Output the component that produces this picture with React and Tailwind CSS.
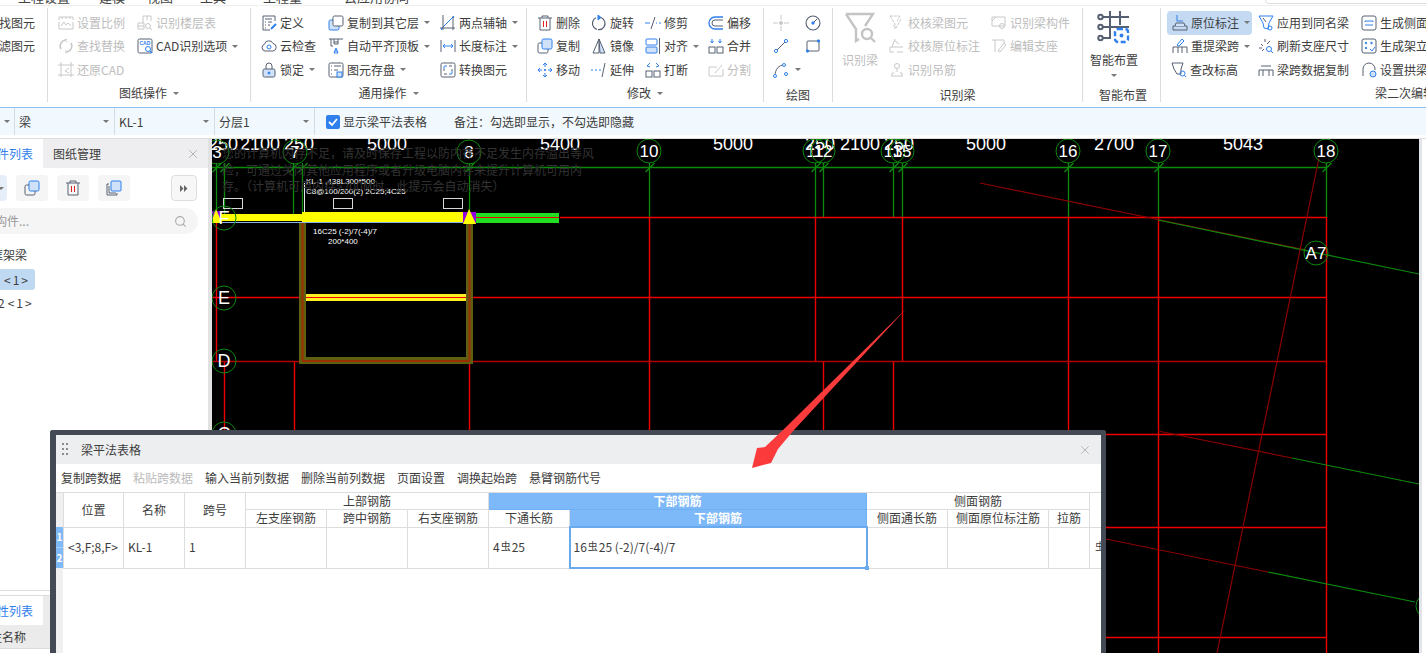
import React from "react";
import { Search, X } from "lucide-react";

const B = "#2f80ed", D = "#566072", G = "#c8c8c8", L = "#cfe2fa";
const Svg = ({ c = D, s = 16, children }) => (
  <svg width={s} height={s} viewBox="0 0 16 16" fill="none" stroke={c} strokeWidth="1" className="shrink-0">{children}</svg>
);
const ic = {
  scale: <Svg c={G}><path d="M1 5V2h14v3M1 7v7h14V7M3 11l3-4 2 3 2-2 3 3" /><path d="M4 2v2M8 2v2M12 2v2" /></Svg>,
  floor: <Svg c={G}><path d="M6 1h8v5M1 8h6v6H1zM6 1v7M10 1v4M1 11h6" /><circle cx="11" cy="11" r="2.5" /><path d="M13 13l2 2" /></Svg>,
  replace: <Svg c={G}><path d="M3 11A6 6 0 0 1 8 2M13 5a6 6 0 0 1-5 9" strokeWidth="1.5" /><path d="M9 1l-2 1 2 2M7 12l2 2-2 1" /></Svg>,
  cad: <Svg><rect x="1" y="1" width="14" height="14" rx="1.5" stroke={D} /><text x="2.5" y="6.5" fontSize="5" fill={B} stroke="none" fontFamily="Liberation Sans" fontWeight="700">CAD</text><circle cx="11" cy="11" r="2.5" stroke={B} /><path d="M13 13l2 2" stroke={B} strokeWidth="1.5" /></Svg>,
  restore: <Svg c={G}><path d="M3 0v15M13 0v15M0 3h16M0 13h16" /><path d="M11 6L7 9l4 2" /></Svg>,
  define: <Svg><path d="M14 6V1H2v14h7" /><path d="M4 4h7M4 7h1M7 7h4M4 10h1M7 10h2M4 13h1" /><path d="M10 14l5-5" stroke={B} strokeWidth="2" /></Svg>,
  cloud: <Svg><path d="M4 13a3.5 3.5 0 0 1-.5-6.8A4.5 4.5 0 0 1 12 5.5 3.8 3.8 0 0 1 12 13z" /><circle cx="8" cy="9" r="2" stroke={B} /></Svg>,
  lock: <Svg><path d="M5 7V4a3 3 0 0 1 6 0v3" /><rect x="2" y="7" width="12" height="8" rx="1.5" fill={L} /><circle cx="8" cy="11" r="1" fill={B} stroke={B} /></Svg>,
  copyF: <Svg><rect x="1" y="5" width="10" height="10" rx="1.5" fill={L} stroke={B} /><rect x="5" y="1" width="10" height="10" rx="1.5" fill="#fff" /></Svg>,
  align: <Svg><path d="M1 1h14M3 1v7M3 8h2" /><path d="M6 1v5h4V1M6 4h4" /><path d="M10 15H6l2-5zM6.500 13h3" stroke={B} /></Svg>,
  store: <Svg><rect x="1" y="1" width="14" height="14" rx="1.5" /><path d="M3 4h1M6 4h7M3 8h1M6 8h4M3 12h1" /><rect x="9" y="10" width="5" height="5" fill={L} stroke={B} /></Svg>,
  axis: <Svg><path d="M1 14L14 1" stroke={B} /><path d="M3 0v15M0 13h15M13 1v14" /><path d="M1 14h1" stroke={B} strokeWidth="2" /><path d="M13 2h1" stroke={B} strokeWidth="2" /></Svg>,
  dim: <Svg><path d="M1 2v12M15 2v12" /><path d="M3 8h10M5 6L3 8l2 2M11 6l2 2-2 2" stroke={B} /></Svg>,
  conv: <Svg><rect x="1" y="1" width="14" height="14" rx="1.5" /><path d="M4 7V5a1 1 0 0 1 1-1h2M12 9v2a1 1 0 0 1-1 1H9" stroke={B} /><path d="M3 8h2M11 8h2M9 4h3M4 12h3" /></Svg>,
  del: <Svg><path d="M1 3h14M5 3V1h6v2M3 3v12h10V3" /><path d="M6.5 6v6M9.5 6v6" stroke="#e02020" /></Svg>,
  rotate: <Svg><path d="M10 2.5a6.3 6.3 0 1 1-5 .2" strokeDasharray="18 1" strokeWidth="1.2" /><path d="M7 0v5l3-2.5z" fill={B} stroke={B} /></Svg>,
  trim: <Svg><path d="M0 8h5" stroke={B} /><path d="M11 8h1M14 8h2" stroke={B} /><path d="M10 2L6 14" /></Svg>,
  offset: <Svg><path d="M15 2H7a6 6 0 0 0 0 12h8" stroke={B} strokeWidth="1.3" /><path d="M15 5H7a3 3 0 0 0 0 6h8" /></Svg>,
  copy: <Svg><rect x="5" y="1" width="10" height="10" rx="1.5" fill={L} stroke={B} /><path d="M5 5H2.5A1.5 1.5 0 0 0 1 6.5v7A1.5 1.5 0 0 0 2.5 15h7a1.5 1.5 0 0 0 1.5-1.5V11" /></Svg>,
  mirror: <Svg><path d="M8 1l-6 14h6z" /><path d="M8 1l6 14H9z" fill={L} stroke={D} /></Svg>,
  alignC: <Svg><rect x="1" y="1" width="11" height="6" rx="1" stroke={B} /><rect x="1" y="9" width="11" height="6" rx="1" fill={L} stroke={B} /><path d="M14.5 0v16" /></Svg>,
  merge: <Svg><path d="M4 1v3M12 1v3" stroke={B} /><path d="M2.5 3L4 5l1.5-2M10.5 3L12 5l1.500-2" stroke={B} /><rect x="1" y="9" width="6" height="6" /><rect x="9" y="9" width="6" height="6" /></Svg>,
  move: <Svg c={B}><path d="M8 1v4M8 11v4M1 8h4M11 8h4M6 3l2-2 2 2M6 13l2 2 2-2M3 6L1 8l2 2M13 6l2 2-2 2" /><circle cx="8" cy="8" r=".7" fill={B} /></Svg>,
  extend: <Svg><path d="M0 8h2M4 8h2M8 8h2" stroke={B} /><path d="M14 1l-3 14" /></Svg>,
  breakI: <Svg><path d="M5 1L2 4l3 1M11 1l3 3-3 1" stroke={B} /><rect x="1" y="9" width="6" height="6" /><rect x="9" y="9" width="6" height="6" /></Svg>,
  split: <Svg c={G}><path d="M15 7v7H1V5h8" /><path d="M7 11l7-8" /></Svg>,
  point: <Svg c={G}><path d="M0 8h5M11 8h5M8 0v5M8 11v5" /><circle cx="8" cy="8" r="1.500" fill={G} /></Svg>,
  circ: <Svg><circle cx="8" cy="8" r="7" strokeWidth="1.1" /><path d="M8 8l4-4" /><circle cx="8" cy="8" r="1.200" fill={B} stroke={B} /></Svg>,
  line: <Svg><path d="M3 13L13 3" /><circle cx="3" cy="13" r="1.600" fill="#fff" stroke={B} /><circle cx="13" cy="3" r="1.600" fill="#fff" stroke={B} /></Svg>,
  rect: <Svg><rect x="2" y="3" width="12" height="10" rx="1" /><circle cx="13.500" cy="3" r="1.200" fill={B} stroke={B} /><circle cx="2.500" cy="13" r="1.200" fill={B} stroke={B} /></Svg>,
  arc: <Svg><path d="M2 14C2 7 6 3 11 3" /><circle cx="2" cy="14" r="1.500" fill="#fff" stroke={B} /><circle cx="11" cy="3" r="1.500" fill="#fff" stroke={B} /><circle cx="13" cy="12" r="1.500" fill="#fff" stroke={B} /></Svg>,
  checkB: <Svg c={G}><path d="M1 1h10M1 1l5 8v5M11 1L8 6M12 4l-5 9 -3-3" strokeDasharray="3 1" /></Svg>,
  checkP: <Svg c={G}><path d="M1 14h4M1 14V9h13M6 1L3 9M5 2l5 4" /><path d="M8 14h6" /></Svg>,
  hang: <Svg c={G}><circle cx="8" cy="4" r="2.500" /><path d="M8 7v3M2 14h12M3 14v-3h2M13 14v-3h-2" /></Svg>,
  bComp: <Svg c={G}><path d="M1 2h13v9H1zM1 6l4-4" /><circle cx="11" cy="11" r="2.500" /></Svg>,
  seat: <Svg c={G}><path d="M1 2h12M4 2v12M13 2v3M7 13l6-8 2 2-6 7z" /></Svg>,
  origin: <Svg><path d="M1 15v-4h14v4M1 15h14" /><path d="M3 11l1-3h8l1 3" fill={L} /><path d="M5 0v6h6" stroke={B} /></Svg>,
  same: <Svg><path d="M1 1h14l-4 7-1 6-4-1-1-5z" stroke={B} /><path d="M5 3l3 4" /><circle cx="12" cy="13" r="2" stroke={B} /></Svg>,
  refresh: <Svg><path d="M3 6l2 2M7 1v3M1 10h3M12 3L9 6M4 13l2-2" /><circle cx="11" cy="11" r="2.500" stroke={B} /><path d="M13 13l2 2" stroke={B} /></Svg>,
  side: <Svg><rect x="1" y="1" width="14" height="14" rx="2" /><path d="M4 6h8M4 6v1M12 6v1M4 10h8" stroke={B} /></Svg>,
  reext: <Svg><path d="M1 15V9h14v6M6 9v6M10 9v6" /><path d="M5 7l5-6 2 2-5 5z" stroke={B} /></Svg>,
  stand: <Svg><rect x="1" y="1" width="14" height="14" rx="2" /><circle cx="5" cy="5" r=".8" fill={B} stroke={B} /><circle cx="10.500" cy="5" r=".8" fill={B} stroke={B} /><circle cx="5" cy="10" r=".8" fill={B} stroke={B} /><path d="M9 11l2 2 3-4" stroke={B} /></Svg>,
  elev: <Svg><path d="M1 1h11l-2 6v5H6l-3-5z" /><circle cx="11.500" cy="11.500" r="2.500" stroke={B} /><path d="M13.500 13.500l1.500 1.500" stroke={B} /></Svg>,
  spanC: <Svg><path d="M1 14V8h14v6M5 8v6M11 8v6M3 4h10" /></Svg>,
  arch: <Svg><path d="M2 14V7a6 6 0 0 1 12 0v1" /><circle cx="12" cy="12" r="3" stroke={B} fill={L} /></Svg>,
};

const Caret = ({ cls = "ml-[5px]" }) => (
  <span className={`inline-block w-0 h-0 border-x-[3px] border-t-[3px] border-x-transparent border-t-[#777] ${cls}`} />
);

const Item = ({ i, t, caret, off }) => (
  <div className={`flex items-center h-[23.6px] gap-[3px] whitespace-nowrap ${off ? "text-[#bdbdbd]" : "text-[#3d3d3d]"}`}>
    {i ? ic[i] : null}
    {t ? <span>{t}</span> : null}
    {caret ? <Caret cls="ml-[2px]" /> : null}
  </div>
);

const Col = ({ w, children }) => <div className={`flex flex-col shrink-0 ${w}`}>{children}</div>;

const Group = ({ w, pl = "pl-[10px]", label, caret, low, children, border = true }) => (
  <div className={`shrink-0 ${w} h-[94px] flex flex-col ${border ? "border-r border-[#dcdcdc]" : ""}`}>
    <div className={`flex h-[74px] pt-[3px] ${pl}`}>{children}</div>
    <div className={`h-[20px] flex items-center justify-center text-[#3d3d3d] whitespace-nowrap ${low ? "pt-[6px]" : "pt-[2px]"}`}>
      {label}{caret ? <Caret cls="ml-[6px]" /> : null}
    </div>
  </div>
);

const Ribbon = () => (
  <div className="flex h-[101px] pt-[2px] bg-white overflow-hidden shrink-0">
    <Group w="w-[48px]" pl="pl-0">
      <Col w="w-[47px] -ml-[1px]"><Item t="找图元" /><Item t="滤图元" /></Col>
    </Group>
    <Group w="w-[203px]" label="图纸操作" caret>
      <Col w="w-[79px]"><Item i="scale" t="设置比例" off /><Item i="replace" t="查找替换" off /><Item i="restore" t="还原CAD" off /></Col>
      <Col w="w-[100px]"><Item i="floor" t="识别楼层表" off /><Item i="cad" t="CAD识别选项" caret /></Col>
    </Group>
    <Group w="w-[276px]" label="通用操作" caret>
      <Col w="w-[67px]"><Item i="define" t="定义" /><Item i="cloud" t="云检查" /><Item i="lock" t="锁定" caret /></Col>
      <Col w="w-[112px]"><Item i="copyF" t="复制到其它层" caret /><Item i="align" t="自动平齐顶板" caret /><Item i="store" t="图元存盘" caret /></Col>
      <Col w="w-[85px]"><Item i="axis" t="两点辅轴" caret /><Item i="dim" t="长度标注" caret /><Item i="conv" t="转换图元" /></Col>
    </Group>
    <Group w="w-[237px]" label="修改" caret>
      <Col w="w-[54px]"><Item i="del" t="删除" /><Item i="copy" t="复制" /><Item i="move" t="移动" /></Col>
      <Col w="w-[54px]"><Item i="rotate" t="旋转" /><Item i="mirror" t="镜像" /><Item i="extend" t="延伸" /></Col>
      <Col w="w-[63px]"><Item i="trim" t="修剪" /><Item i="alignC" t="对齐" caret /><Item i="breakI" t="打断" /></Col>
      <Col w="w-[50px]"><Item i="offset" t="偏移" /><Item i="merge" t="合并" /><Item i="split" t="分割" off /></Col>
    </Group>
    <Group w="w-[69px]" pl="pl-[9px]" label="绘图" low>
      <Col w="w-[32px]"><Item i="point" /><Item i="line" /><div className="flex items-center h-[23.6px] w-[40px]">{ic.arc}<Caret cls="ml-[6px]" /></div></Col>
      <Col w="w-[20px]"><Item i="circ" /><Item i="rect" /></Col>
    </Group>
    <Group w="w-[250px]" pl="pl-0" label="识别梁" low>
      <Col w="w-[56px]">
        <div className="flex flex-col items-center text-[#bdbdbd] w-[54px]">
          <svg width="32" height="32" viewBox="0 0 32 32" fill="none" stroke="#c4c4c4" strokeWidth="2.400" className="mt-[1px]"><path d="M2 2h27l-8 12M2 2l10 15v12l3-2" /><circle cx="23" cy="22" r="5" /><path d="M27 26l4 4" /></svg>
          <span className="mt-[7px]">识别梁</span>
        </div>
      </Col>
      <Col w="w-[102px]"><Item i="checkB" t="校核梁图元" off /><Item i="checkP" t="校核原位标注" off /><Item i="hang" t="识别吊筋" off /></Col>
      <Col w="w-[85px]"><Item i="bComp" t="识别梁构件" off /><Item i="seat" t="编辑支座" off /></Col>
    </Group>
    <Group w="w-[78px]" pl="pl-0" label={<span className="ml-[3px]">智能布置</span>} low>
      <div className="flex flex-col items-center w-[62px] text-[#3d3d3d]">
        <svg width="34" height="34" viewBox="0 0 34 34" fill="none" stroke="#566072" strokeWidth="2">
          <path d="M6 6h26M6 16h26M6 27h8M13 0v27M23 0v14" /><circle cx="3.500" cy="6" r="2.200" /><circle cx="3.500" cy="16" r="2.200" /><circle cx="3.500" cy="27" r="2.200" />
          <rect x="18" y="18" width="13" height="13" rx="3" stroke="#2f80ed" strokeWidth="2.400" strokeDasharray="5 2.500" /><circle cx="24.500" cy="24.500" r="1" fill="#2f80ed" stroke="#2f80ed" />
        </svg>
        <span className="mt-[6px] whitespace-nowrap">智能布置</span>
        <Caret cls="mt-[5px]" />
      </div>
    </Group>
    <Group w="w-[490px]" pl="pl-[6px]" label={<span className="ml-[-2px]">梁二次编辑</span>} border={false}>
      <Col w="w-[91px]">
        <div className="w-[85px] pl-[5px] rounded-[4px] bg-[#c3daf2]"><Item i="origin" t="原位标注" caret /></div>
        <div className="pl-[5px]"><Item i="reext" t="重提梁跨" caret /></div>
        <div className="pl-[4px]"><Item i="elev" t="查改标高" /></div>
      </Col>
      <Col w="w-[103px]"><Item i="same" t="应用到同名梁" /><Item i="refresh" t="刷新支座尺寸" /><Item i="spanC" t="梁跨数据复制" /></Col>
      <Col w="w-[90px]"><Item i="side" t="生成侧面筋" /><Item i="stand" t="生成架立筋" /><Item i="arch" t="设置拱梁" /></Col>
    </Group>
  </div>
);

const Sel = ({ t, w = "w-[100px]" }) => (
  <div className={`${w} shrink-0 h-full border-r border-[#d5dce4] flex items-center justify-between pl-[4px] pr-[5px]`}>
    <span>{t}</span><Caret cls="" />
  </div>
);

const Toolbar = () => (
  <div className="flex items-center h-[28px] border-t border-[#8fc0f2] bg-[#f2f9fe] shrink-0 text-[#3d3d3d]">
    <Sel t="" w="w-[15px]" />
    <Sel t="梁" />
    <Sel t="KL-1" />
    <Sel t="分层1" />
    <span className="w-[14px] h-[14px] bg-[#2f80ed] rounded-[2px] ml-[11px] flex items-center justify-center">
      <svg width="12" height="12" viewBox="0 0 12 12" fill="none" stroke="#fff" strokeWidth="1.800"><path d="M2 6l3 3 5-6" /></svg>
    </span>
    <span className="ml-[3px]">显示梁平法表格</span>
    <span className="ml-[27px]">备注：勾选即显示，不勾选即隐藏</span>
  </div>
);

const PanelBtn = ({ children, cls = "w-[32px] bg-[#f5f5f5]" }) => (
  <div className={`h-[26px] rounded-[4px] flex items-center justify-center shrink-0 ${cls}`}>{children}</div>
);

const LeftPanel = () => (
  <div className="w-[208px] shrink-0 h-full flex flex-col bg-white overflow-hidden text-[#3d3d3d]">
    <div className="h-[29px] flex bg-[#eeeef0] shrink-0">
      <div className="w-[43px] bg-white flex items-center justify-end pr-[10px] text-[#2f80ed] whitespace-nowrap">构件列表</div>
      <div className="ml-[10px] flex items-center">图纸管理</div>
      <X size={14} strokeWidth={1.200} color="#999" className="ml-auto mr-[8px] self-center" />
    </div>
    <div className="flex gap-[9px] mt-[7px] -ml-[25px] shrink-0">
      <PanelBtn cls="w-[32px] bg-[#e6eefa]"><Caret cls="ml-[20px]" /></PanelBtn>
      <PanelBtn>{ic.copy}</PanelBtn>
      <PanelBtn>{ic.del}</PanelBtn>
      <PanelBtn>
        <Svg><rect x="5" y="1" width="10" height="10" rx="1" fill={L} stroke={B} /><path d="M3 4H1v11h10v-2M3 6v7h7" /></Svg>
      </PanelBtn>
      <PanelBtn cls="w-[26px] ml-[32px] bg-[#f7f7f7] border border-[#dedede]">
        <svg width="8" height="7" viewBox="0 0 8 7" fill="#666"><path d="M0 0l3.500 3.500L0 7zM4 0l3.500 3.500L4 7z" /></svg>
      </PanelBtn>
    </div>
    <div className="h-[26px] mt-[7px] -ml-[40px] w-[238px] rounded-full bg-[#f5f5f5] flex items-center pl-[11px] pr-[11px] text-[#999] shrink-0">
      <span>搜索构件...</span>
      <Search size={13} color="#aaa" className="ml-auto" />
    </div>
    <div className="mt-[12px] -ml-[9px] leading-[17px] shrink-0">框架梁</div>
    <div className="mt-[6px] w-[35px] h-[21px] bg-[#c0d9f2] rounded-r-[3px] flex items-center justify-end pr-[5px] tracking-[2px] shrink-0">&lt;1&gt;</div>
    <div className="mt-[2px] h-[21px] flex items-center -ml-[2px] shrink-0">2<span className="ml-[3px] tracking-[2px]">&lt;1&gt;</span></div>
    <div className="mt-auto border-t border-[#dcdcdc] shrink-0">
      <div className="h-[5px] border-b border-[#dcdcdc]" />
      <div className="h-[29px] bg-[#ebebeb] flex">
        <div className="w-[43px] bg-white flex items-center justify-end pr-[10px] text-[#2f80ed] whitespace-nowrap">属性列表</div>
      </div>
      <div className="h-[24px] bg-[#ebebeb] border-b border-[#dcdcdc] flex items-center justify-start -ml-[22px] pl-0 w-[230px] whitespace-nowrap">属性名称</div>
      <div className="h-[4px]" />
    </div>
  </div>
);

const RED = "#ee0000", DK = "#8a0000", GR = "#0c8a0c", WH = "#ffffff";
const Bubble = ({ x, y, t, fs = 17 }) => (
  <g>
    <circle cx={x} cy={y} r="12" fill="none" stroke={GR} />
    <text x={x} y={y + 6} fill={WH} fontSize={fs} textAnchor="middle" fontFamily="Liberation Sans">{t}</text>
  </g>
);
const Dim = ({ x, t }) => (
  <text x={x} y="150" fill={WH} fontSize="18" fontFamily="Liberation Sans">{t}</text>
);

const hLines = [
  [212, 470, 217.5], [560, 1326, 217.5], [212, 1326, 297.5], [1106, 1326, 434.5], [1106, 1326, 527.5], [1106, 1326, 637.5],
];
const vLines = [
  [216.5, 217, 361], [649.5, 217, 653], [815.5, 217, 361], [902.5, 217, 361], [1068.5, 217, 653], [1158.5, 217, 653], [1326.5, 217, 653],
  [224.5, 361, 434], [294.5, 361, 434], [469.5, 361, 434], [823.5, 361, 434], [893.5, 361, 434],
];

const Cad = () => (
  <svg width="1207" height="514" viewBox="212 139 1207 514" className="block">
    <rect x="212" y="139" width="1207" height="514" fill="#000" />
    <g stroke={GR} strokeWidth="1.300">
      <path d="M212 167.500H1326" />
      {[216.5, 224.5, 293.5, 302.5, 469.5, 649.5, 815.5, 823.5, 893.5, 902.5, 1068.5, 1158.5, 1326.5].map((x) => (
        <path key={x} d={`M${x} 163V217M${x - 4} 172L${x + 5} 163`} />
      ))}
    </g>
    {hLines.map(([a, b, y], i) => <line key={`h${i}`} x1={a} x2={b} y1={y} y2={y} stroke={RED} strokeWidth="1.400" />)}
    {vLines.map(([x, a, b], i) => <line key={`v${i}`} x1={x} x2={x} y1={a} y2={b} stroke={RED} strokeWidth="1.400" />)}
    <line x1="212" x2="1326" y1="361.5" y2="361.5" stroke="#b00000" strokeWidth="1.600" />
    <g fill="none" strokeWidth="1.200">
      <path d="M980 183L1306 250" stroke={DK} />
      <path d="M1158 220L1419 274" stroke={GR} />
      <path d="M1158 431L1292 458" stroke={DK} />
      <path d="M1292 458L1419 484" stroke={GR} />
      <path d="M1106 539L1268 572" stroke={DK} />
      <path d="M1268 572L1415 602" stroke={GR} />
      <path d="M1319 158L1217 653" stroke={DK} />
    </g>
    <rect x="470" y="213" width="89" height="10" fill="#22dd22" />
    <path d="M470 217.500H559" stroke={RED} />
    <g fill="#5f5f12">
      <rect x="299" y="223" width="7" height="141" />
      <rect x="466" y="223" width="7" height="141" />
      <rect x="303" y="357" width="170" height="7" />
    </g>
    <path d="M302.500 223V361M469.500 223V361M302 361H470" stroke="#993000" strokeWidth="2" fill="none" />
    <rect x="306" y="294" width="160" height="7" fill="#ffee22" />
    <path d="M306 297.500H466" stroke={RED} />
    <rect x="212" y="214" width="90" height="7" fill="#ffff00" />
    <rect x="302" y="212" width="166" height="11" fill="#ffff00" />
    <path d="M212 222.500H470" stroke="#8ab4e0" />
    <path d="M463 212h13v12h-13z" fill="#9000e0" />
    <path d="M469 209l7 15h-13z" fill="#ffff00" />
    <path d="M212 211h9v12h-9z" fill="#9000e0" />
    <path d="M216 209l6 14h-11z" fill="#ffff00" />
    <g fill="none" stroke="#d8d8d8">
      <rect x="223.500" y="198.500" width="19" height="10" />
      <rect x="333.500" y="198.500" width="19" height="10" />
      <rect x="443.500" y="198.500" width="19" height="10" />
    </g>
    <path d="M304.500 183V212" stroke="#e8e8e8" />
    <g fill={WH} fontFamily="Liberation Sans" fontSize="8">
      <text x="306" y="184">KL-1 ,438L300*500</text>
      <text x="306" y="194">C8@100/200(2) 2C25;4C25</text>
      <text x="313" y="234">16C25 (-2)/7(-4)/7</text>
      <text x="328" y="244">200*400</text>
    </g>
    <Dim x="208" t="250" /><Dim x="240" t="2100" /><Dim x="284" t="250" /><Dim x="367" t="5000" /><Dim x="540" t="5400" />
    <Dim x="713" t="5000" /><Dim x="805" t="250" /><Dim x="840" t="2100" /><Dim x="884" t="250" /><Dim x="966" t="5000" /><Dim x="1094" t="2700" /><Dim x="1223" t="5043" />
    <Bubble x={217} y={152} t="3" /><Bubble x={295} y={152} t="7" /><Bubble x={469} y={152} t="8" /><Bubble x={649} y={151} t="10" />
    <Bubble x={815} y={151} t="11" /><Bubble x={823} y={151} t="12" /><Bubble x={893} y={151} t="13" /><Bubble x={902} y={151} t="15" />
    <Bubble x={1068} y={151} t="16" /><Bubble x={1158} y={151} t="17" /><Bubble x={1326} y={151} t="18" />
    <Bubble x={224} y={218} t="F" fs={18} /><Bubble x={224} y={298} t="E" fs={18} /><Bubble x={224} y={361} t="D" fs={18} /><Bubble x={224} y={434} t="C" fs={18} />
    <Bubble x={1316} y={253} t="A7" fs={17} /><Bubble x={1428} y={606} t="A" />
  </svg>
);

const Sym = () => <span className="text-[10px] relative -top-[2px] mx-[1px]">虫</span>;
const cols = [60, 61, 61, 81, 81, 81, 81, 297, 81, 101, 41, 13];
const th = "border border-[#dddddd] font-normal text-center text-[#3d3d3d] leading-[14px] p-0 overflow-hidden whitespace-nowrap";
const thB = "border border-[#6fb0f5] bg-[#7db8f8] text-white font-bold text-center leading-[14px] p-0 whitespace-nowrap";
const td = "border border-[#dddddd] px-[4px] pb-[2px] text-[#3d3d3d] whitespace-nowrap overflow-hidden";

const Dialog = () => (
  <div className="absolute left-[50px] top-[430px] w-[1056px] h-[240px] bg-white border-t-[5px] border-l-[6px] border-r-[5px] border-[#434a54] rounded-t-[3px] flex flex-col text-[#3d3d3d] overflow-hidden">
    <div className="h-[29px] shrink-0 bg-[#edeef0] flex items-center pl-[6px] pr-[9px]">
      <svg width="7" height="16" viewBox="0 0 7 16" fill="#8b8b8b"><rect x="0" y="1" width="2" height="2" /><rect x="4" y="1" width="2" height="2" /><rect x="0" y="6" width="2" height="2" /><rect x="4" y="6" width="2" height="2" /><rect x="0" y="11" width="2" height="2" /><rect x="4" y="11" width="2" height="2" /></svg>
      <span className="ml-[12px]">梁平法表格</span>
      <X size={14} strokeWidth={1.200} color="#a0a0a0" className="ml-auto" />
    </div>
    <div className="h-[28px] shrink-0 flex items-center gap-[12px] pl-[5px] whitespace-nowrap">
      <span>复制跨数据</span><span className="text-[#bbbbbb]">粘贴跨数据</span><span>输入当前列数据</span><span>删除当前列数据</span><span>页面设置</span><span>调换起始跨</span><span>悬臂钢筋代号</span>
    </div>
    <div className="flex flex-1 min-h-0 border-t border-[#dddddd]">
      <div className="w-[7px] shrink-0 bg-[#f0f0f0] flex flex-col">
        <div className="h-[34px] shrink-0" />
        <div className="h-[20.500px] bg-[#7db8f8] text-white font-bold text-[10px] flex items-center justify-center border-b border-[#a8d0fa]">1</div>
        <div className="h-[20.500px] bg-[#7db8f8] text-white font-bold text-[10px] flex items-center justify-center">2</div>
      </div>
      <table className="table-fixed border-collapse w-[1038px] h-[75px] self-start">
        <colgroup>{cols.map((w, i) => <col key={i} style={{ width: w }} />)}</colgroup>
        <tbody>
          <tr className="h-[16px]">
            <th rowSpan={2} className={`${th} border-t-0`}>位置</th>
            <th rowSpan={2} className={`${th} border-t-0`}>名称</th>
            <th rowSpan={2} className={`${th} border-t-0`}>跨号</th>
            <th colSpan={3} className={`${th} border-t-0`}>上部钢筋</th>
            <th colSpan={2} className={`${thB} border-t-0`}>下部钢筋</th>
            <th colSpan={3} className={`${th} border-t-0`}>侧面钢筋</th>
            <th rowSpan={2} className={`${th} border-t-0 border-r-0`}></th>
          </tr>
          <tr className="h-[18px]">
            <th className={th}>左支座钢筋</th><th className={th}>跨中钢筋</th><th className={th}>右支座钢筋</th>
            <th className={th}>下通长筋</th><th className={thB}>下部钢筋</th>
            <th className={th}>侧面通长筋</th><th className={th}>侧面原位标注筋</th><th className={th}>拉筋</th>
          </tr>
          <tr className="h-[41px]">
            <td className={td}>&lt;3,F;8,F&gt;</td><td className={td}>KL-1</td><td className={td}>1</td>
            <td className={td}></td><td className={td}></td><td className={td}></td>
            <td className={td}>4<Sym />25</td>
            <td className="relative border-2 border-[#6aa9ec] px-[3px] pb-[2px] whitespace-nowrap">16<Sym />25 (-2)/7(-4)/7
              <span className="absolute -right-[3px] -bottom-[3px] w-[4px] h-[4px] bg-[#6aa9ec]" />
            </td>
            <td className={td}></td><td className={td}></td><td className={td}></td>
            <td className={`${td} border-r-0`}><Sym /></td>
          </tr>
        </tbody>
      </table>
    </div>
  </div>
);

export default function App() {
  return (
    <div className="relative w-[1426px] h-[653px] overflow-hidden bg-white flex flex-col text-[12px]" style={{ fontFamily: '"Noto Sans CJK SC", "Liberation Sans", sans-serif' }}>
      <div className="h-[6px] shrink-0 overflow-hidden relative border-b border-[#eeeeee] text-[#444] text-[13px] leading-[13px]">
        <div className="flex -mt-[10px] h-[13px] whitespace-nowrap">
          <span className="ml-[18px]">工程设置</span><span className="ml-[29px]">建模</span><span className="ml-[22px]">视图</span><span className="ml-[27px]">工具</span><span className="ml-[37px]">工程量</span><span className="ml-[42px]">云应用协同</span>
        </div>
        <div className="absolute left-[1265px] -top-[14px] w-[170px] h-[18px] border border-[#dddddd] rounded-[4px]" />
      </div>
      <Ribbon />
      <Toolbar />
      <div className="h-[4px] shrink-0 bg-white border-b border-[#dddddd]" />
      <div className="flex flex-1 min-h-0">
        <LeftPanel />
        <div className="w-[4px] shrink-0 bg-[#e2e2e2]" />
        <div className="relative w-[1207px] shrink-0 overflow-hidden bg-black">
          <Cad />
          <div className="absolute left-[10px] top-[6px] text-[#333333] leading-[16.500px] whitespace-nowrap">
            <div>您的计算机内存不足，请及时保存工程以防内存不足发生内存溢出等风</div>
            <div>险，可通过关闭其他应用程序或者升级电脑内存来提升计算机可用内</div>
            <div>存。（计算机可用内存&gt;200M时，此提示会自动消失）</div>
          </div>
        </div>
        <div className="w-[3px] shrink-0 bg-[#e1e5ea]" />
      </div>
      <Dialog />
      <svg className="absolute left-0 top-0 pointer-events-none" width="1426" height="653" viewBox="0 0 1426 653">
        <polygon points="906,309 794,430 778,449 771,463 752,468 757,448 765,447 783,430" fill="#fb3a3c" />
      </svg>
    </div>
  );
}
